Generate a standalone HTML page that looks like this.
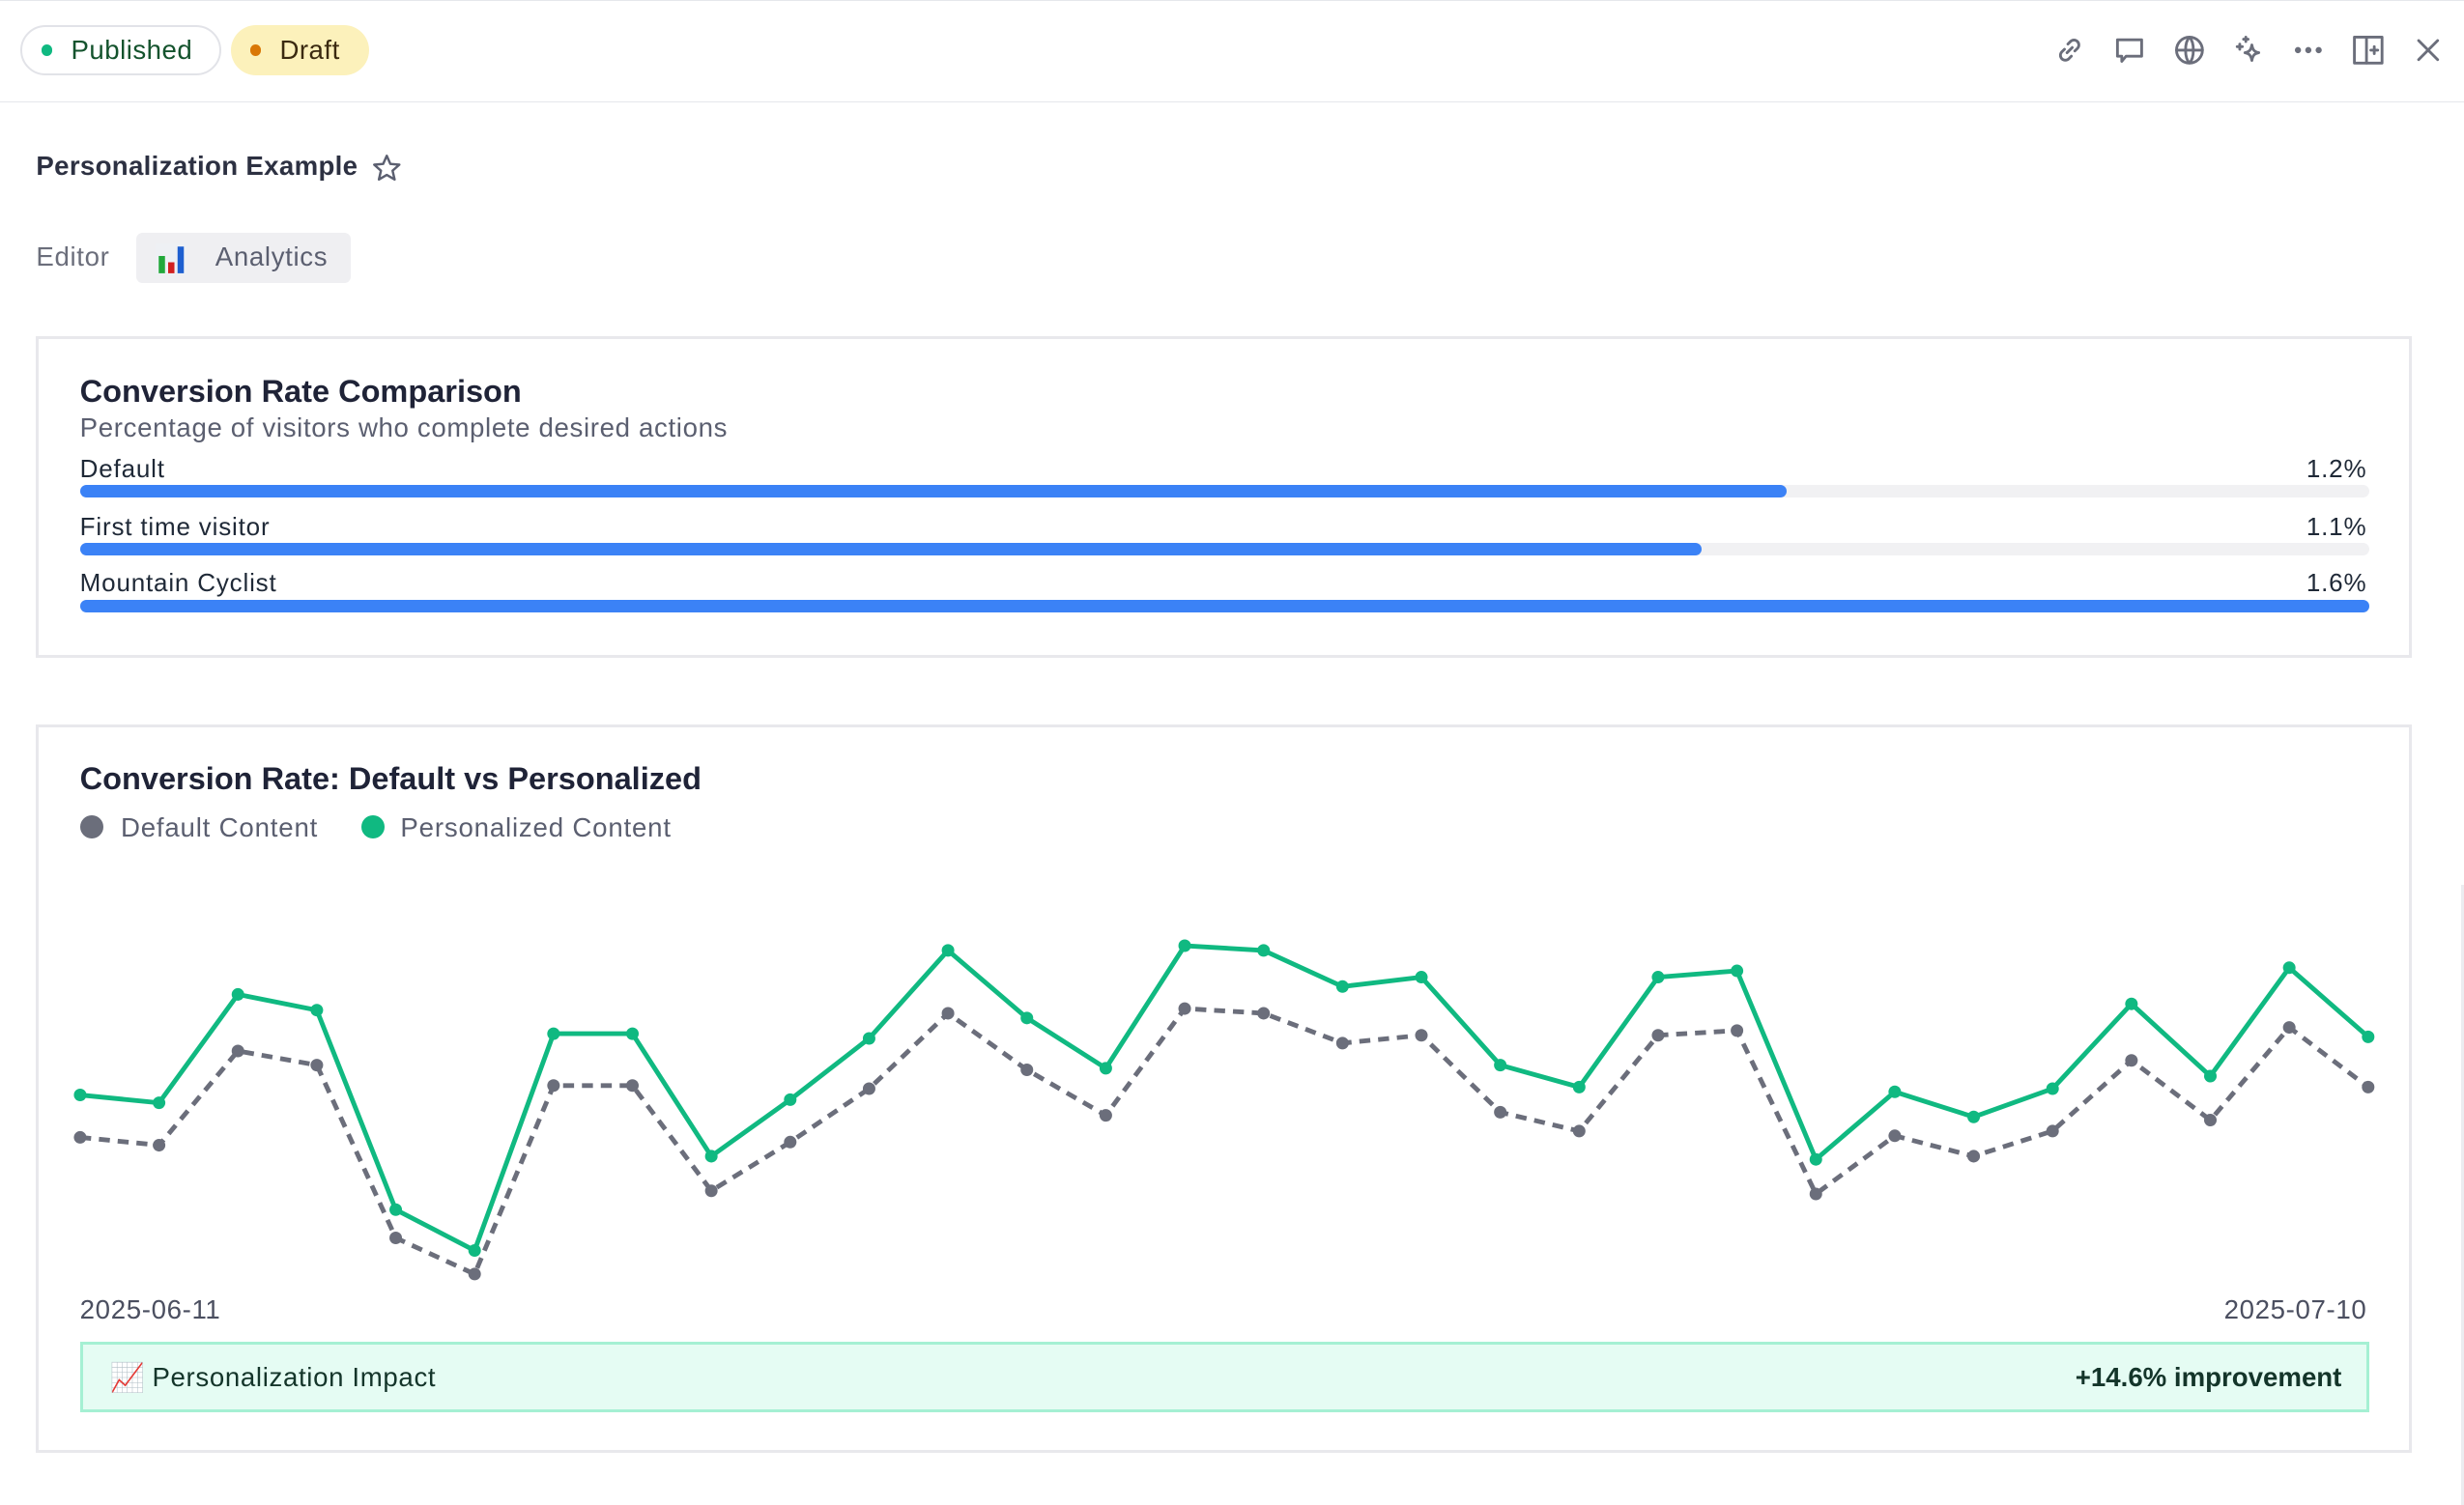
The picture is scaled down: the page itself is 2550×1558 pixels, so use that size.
<!DOCTYPE html>
<html><head><meta charset="utf-8"><style>
*{box-sizing:border-box;margin:0;padding:0}
html,body{width:2550px;height:1558px;overflow:hidden;background:#fff}
#r{zoom:1.62628;width:1568px;height:958px;position:relative;font-family:"Liberation Sans",sans-serif;color:#1f2937}
.abs{position:absolute}
.top{left:0;top:0;width:1568px;height:65px;border-top:1px solid #e5e7eb;border-bottom:1px solid #e5e7eb}
.pill{position:absolute;top:16px;height:32px;border-radius:16px;font-size:17px;display:flex;align-items:center;letter-spacing:0.3px}
.dot{width:7px;height:7px;border-radius:50%;margin-right:12px}
.card{position:absolute;left:23px;width:1512px;border:2px solid #e8e8ec;background:#fff}
.lbl{position:absolute;left:26px;font-size:16px;color:#1f2937;letter-spacing:0.5px}
.val{position:absolute;right:27px;font-size:16px;color:#1f2937;letter-spacing:0.5px}
.track{position:absolute;left:26px;width:1457px;height:8px;border-radius:4px;background:#f1f1f3}
.fill{height:8px;border-radius:4px;background:#3b82f6}
svg.ic{position:absolute;top:21px;width:22px;height:22px;fill:none;stroke:#6b6e7b;stroke-width:1.6;stroke-linecap:round;stroke-linejoin:round}
</style></head><body><div id="r">
<div class="abs top"></div>
<div class="pill" style="left:13px;width:128px;border:1.5px solid #e2e3e8;padding-left:12px;color:#14532d"><span class="dot" style="background:#10b981"></span>Published</div>
<div class="pill" style="left:147px;width:88px;background:#fcf1bb;padding-left:12px;color:#3b2a10"><span class="dot" style="background:#d97706"></span>Draft</div>
<svg class="ic" style="left:1306px" viewBox="0 0 20 20"><path d="M8.5 11.5l3-3M9 6.5l1.5-1.5a2.8 2.8 0 014 4L13 10.5M11 13.5L9.5 15a2.8 2.8 0 01-4-4L7 9.5"/></svg>
<svg class="ic" style="left:1344px" viewBox="0 0 20 20"><path d="M3 4h14v9.5H8l-2.5 3v-3H3z"/></svg>
<svg class="ic" style="left:1382px" viewBox="0 0 20 20"><circle cx="10" cy="10" r="7.5"/><path d="M2.5 10h15M10 2.5c-3 3-3 12 0 15M10 2.5c3 3 3 12 0 15"/></svg>
<svg class="ic" style="left:1420px" viewBox="0 0 20 20"><path d="M12 7c.5 3 1.5 4 4 4.5-2.5.5-3.5 1.5-4 4.5-.5-3-1.5-4-4-4.5 2.5-.5 3.5-1.5 4-4.5zM5 6.5v3M3.5 8h3M8.5 2.5v2.5M7.2 3.7h2.6"/></svg>
<svg class="ic" style="left:1458px" viewBox="0 0 20 20"><circle cx="4" cy="10" r="1" fill="#6b6e7b"/><circle cx="10" cy="10" r="1" fill="#6b6e7b"/><circle cx="16" cy="10" r="1" fill="#6b6e7b"/></svg>
<svg class="ic" style="left:1496px" viewBox="0 0 20 20"><rect x="2" y="2.5" width="16" height="15"/><path d="M9 2.5v15M13.5 8v4M11.5 10h4"/></svg>
<svg class="ic" style="left:1534px" viewBox="0 0 20 20"><path d="M4.5 4.5l11 11M15.5 4.5l-11 11"/></svg>

<div class="abs" style="left:23px;top:96px;font-size:17px;font-weight:bold;color:#2d3142;letter-spacing:0.2px">Personalization Example</div>
<svg class="abs" style="left:236px;top:97px" width="20" height="20" viewBox="0 0 20 20"><path d="M10 2l2.3 5.2 5.7.5-4.3 3.8 1.3 5.6L10 14.2 5 17.1l1.3-5.6L2 7.7l5.7-.5z" fill="none" stroke="#5b5f70" stroke-width="1.5" stroke-linejoin="round"/></svg>
<div class="abs" style="left:23px;top:154px;font-size:17px;color:#6b6e7b;letter-spacing:0.4px">Editor</div>
<div class="abs" style="left:87px;top:148px;width:136px;height:32px;background:#efeff2;border-radius:4px"></div>
<svg class="abs" style="left:99px;top:155px" width="20" height="20" viewBox="0 0 20 20"><rect x="0" y="0" width="20" height="20" fill="#eef0f4"/><rect x="2" y="8" width="4" height="11" fill="#22a83a"/><rect x="8" y="12" width="4" height="7" fill="#d21f1f"/><rect x="14" y="2" width="4" height="17" fill="#1e5fd0"/></svg>
<div class="abs" style="left:137px;top:154px;font-size:17px;color:#5b5f70;letter-spacing:0.4px">Analytics</div>

<div class="card" style="top:214px;height:205px">
<div class="abs" style="left:26px;top:22px;font-size:20px;font-weight:bold;color:#1f2337">Conversion Rate Comparison</div>
<div class="abs" style="left:26px;top:47px;font-size:17px;color:#5b5f70;letter-spacing:0.4px">Percentage of visitors who complete desired actions</div>
<div class="lbl" style="top:73px">Default</div><div class="val" style="top:73px">1.2%</div>
<div class="track" style="top:93px"><div class="fill" style="width:1086px"></div></div>
<div class="lbl" style="top:110px">First time visitor</div><div class="val" style="top:110px">1.1%</div>
<div class="track" style="top:130px"><div class="fill" style="width:1032px"></div></div>
<div class="lbl" style="top:146px">Mountain Cyclist</div><div class="val" style="top:146px">1.6%</div>
<div class="track" style="top:166px"><div class="fill" style="width:1457px"></div></div>
</div>

<div class="card" style="top:461px;height:464px">
<div class="abs" style="left:26px;top:22px;font-size:20px;font-weight:bold;color:#1f2337">Conversion Rate: Default vs Personalized</div>
<div class="abs" style="left:26px;top:56px;width:15px;height:15px;border-radius:50%;background:#6b6e7b"></div>
<div class="abs" style="left:52px;top:54px;font-size:17px;color:#5b5f70;letter-spacing:0.5px">Default Content</div>
<div class="abs" style="left:205px;top:56px;width:15px;height:15px;border-radius:50%;background:#10b981"></div>
<div class="abs" style="left:230px;top:54px;font-size:17px;color:#5b5f70;letter-spacing:0.5px">Personalized Content</div>
<div class="abs" style="left:26px;top:361px;font-size:17px;color:#4b4f60;letter-spacing:0.4px">2025-06-11</div>
<div class="abs" style="right:27px;top:361px;font-size:17px;color:#4b4f60;letter-spacing:0.4px">2025-07-10</div>
<div class="abs" style="left:26px;top:391px;width:1457px;height:45px;background:#e5fcf3;border:2px solid #a5f0d3"></div>
<div class="abs" style="left:45px;top:404px;font-size:18px">📈</div>
<div class="abs" style="left:72px;top:404px;font-size:17px;color:#14352a;letter-spacing:0.4px">Personalization Impact</div>
<div class="abs" style="right:43px;top:404px;font-size:17px;font-weight:bold;color:#14352a">+14.6% improvement</div>
</div>

<svg class="abs" style="left:0;top:0" width="1568" height="958" id="ch"></svg>
<div class="abs" style="left:1566px;top:563px;width:2px;height:395px;background:#ececf0"></div>
</div>
<script>
var g=[697,702,633,643,770,796,658,658,736,700,661,605,648,680,602,605,628,622,678,692,622,618,738,695,711,693,639,685,616,660];
var d=[724,729,669,678,788,811,691,691,758,727,693,645,681,710,642,645,664,659,708,720,659,656,760,723,736,720,675,713,654,692];
var s='',pg='',pd='';
for(var i=0;i<30;i++){var x=51+i*1456/29;pg+=(i?'L':'M')+x+' '+g[i];pd+=(i?'L':'M')+x+' '+d[i];}
s+='<path d="'+pd+'" fill="none" stroke="#6b6e7b" stroke-width="3" stroke-dasharray="7 5"/>';
s+='<path d="'+pg+'" fill="none" stroke="#10b981" stroke-width="3"/>';
for(var i=0;i<30;i++){var x=51+i*1456/29;s+='<circle cx="'+x+'" cy="'+d[i]+'" r="4" fill="#6b6e7b"/><circle cx="'+x+'" cy="'+g[i]+'" r="4" fill="#10b981"/>';}
document.getElementById('ch').innerHTML=s;
</script>
</body></html>
